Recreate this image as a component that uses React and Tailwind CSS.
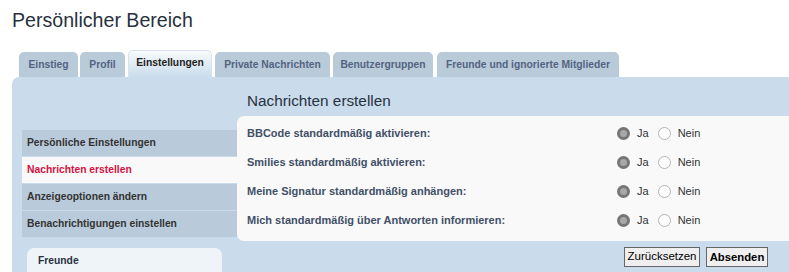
import React from 'react';

const tabs = [
  { label: 'Einstieg', w: 'w-[59px]', ml: 'ml-0' },
  { label: 'Profil', w: 'w-[45px]', ml: 'ml-[2px]' },
  { label: 'Einstellungen', w: 'w-[84px]', ml: 'ml-[3px]', active: true },
  { label: 'Private Nachrichten', w: 'w-[115px]', ml: 'ml-[3px]' },
  { label: 'Benutzergruppen', w: 'w-[100px]', ml: 'ml-[3px]' },
  { label: 'Freunde und ignorierte Mitglieder', w: 'w-[182px]', ml: 'ml-[4px]' },
];

const menu = [
  { label: 'Persönliche Einstellungen' },
  { label: 'Nachrichten erstellen', active: true },
  { label: 'Anzeigeoptionen ändern' },
  { label: 'Benachrichtigungen einstellen' },
];

const options = [
  'BBCode standardmäßig aktivieren:',
  'Smilies standardmäßig aktivieren:',
  'Meine Signatur standardmäßig anhängen:',
  'Mich standardmäßig über Antworten informieren:',
];

const Radio = ({ checked }) =>
  checked ? (
    <span className="block w-[13px] h-[13px] rounded-full bg-[#767676] flex items-center justify-center">
      <span className="block w-[7px] h-[7px] rounded-full bg-[#a8a8a8]" />
    </span>
  ) : (
    <span className="block w-[13px] h-[13px] rounded-full border border-[#b4b4b4] bg-[#fdfdfd]" />
  );

export default function App() {
  return (
    <div className="w-[789px] h-[272px] overflow-hidden bg-white font-['Liberation_Sans',Arial,sans-serif]">
      <h2 className="pl-[12px] pt-[8px] text-[19.6px] leading-[24px] text-[#28313f]">Persönlicher Bereich</h2>

      {/* Tabs */}
      <div className="flex items-end pl-[19px] mt-[18px] h-[27px]">
        {tabs.map((t) =>
          t.active ? (
            <div
              key={t.label}
              className={`${t.w} ${t.ml} h-[27px] pb-[3px] flex items-center justify-center rounded-t-[5px] border border-b-0 border-[#d6e3ee] bg-gradient-to-b from-[#f8fbfd] to-[#cadceb] text-[10.3px] font-bold text-[#222]`}
            >
              {t.label}
            </div>
          ) : (
            <div
              key={t.label}
              className={`${t.w} ${t.ml} h-[25px] flex items-center justify-center rounded-t-[5px] bg-[#b9cad9] text-[10.3px] font-bold text-[#536482]`}
            >
              {t.label}
            </div>
          )
        )}
      </div>

      {/* Panel */}
      <div className="ml-[12px] h-[200px] bg-[#cadceb] rounded-tl-[7px] flex">
        <div className="w-[225px] shrink-0 pt-[53px]">
          <div className="flex flex-col gap-[1px] pl-[10px]">
            {menu.map((m) => (
              <div
                key={m.label}
                className={`h-[26px] pl-[5px] flex items-center text-[10.3px] font-bold ${
                  m.active ? 'bg-[#f9f9f9] text-[#d31141]' : 'bg-[#b9cada] text-[#333]'
                }`}
              >
                {m.label}
              </div>
            ))}
          </div>
          <div className="ml-[15px] mr-[15px] mt-[11px] h-[40px] rounded-t-[7px] bg-[#eef4f8] pl-[11px] pt-[5px] text-[10.3px] font-bold text-[#28313f]">
            Freunde
          </div>
        </div>

        <div className="flex-1">
          <h3 className="pl-[10px] pt-[14px] h-[39px] text-[15.3px] leading-[20px] text-[#28313f]">Nachrichten erstellen</h3>
          <div className="bg-[#f9f9f9] rounded-l-[7px] pt-[3px] pb-[6px]">
            {options.map((o) => (
              <div key={o} className="h-[29px] flex items-center pl-[10px]">
                <div className="w-[370px] text-[11px] font-bold text-[#425067]">{o}</div>
                <div className="flex items-center text-[11px] text-[#333]">
                  <Radio checked />
                  <span className="ml-[7px]">Ja</span>
                  <span className="ml-[9px] flex">
                    <Radio />
                  </span>
                  <span className="ml-[7px]">Nein</span>
                </div>
              </div>
            ))}
          </div>
          <div className="flex justify-end gap-[6px] pr-[21px] pt-[6px]">
            <button className="h-[20px] w-[76px] border border-[#666] bg-[#efefef] text-[11.5px] text-[#000]">Zurücksetzen</button>
            <button className="h-[20px] w-[62px] border border-[#666] bg-[#efefef] text-[11.3px] font-bold text-[#000]">Absenden</button>
          </div>
        </div>
      </div>
    </div>
  );
}
